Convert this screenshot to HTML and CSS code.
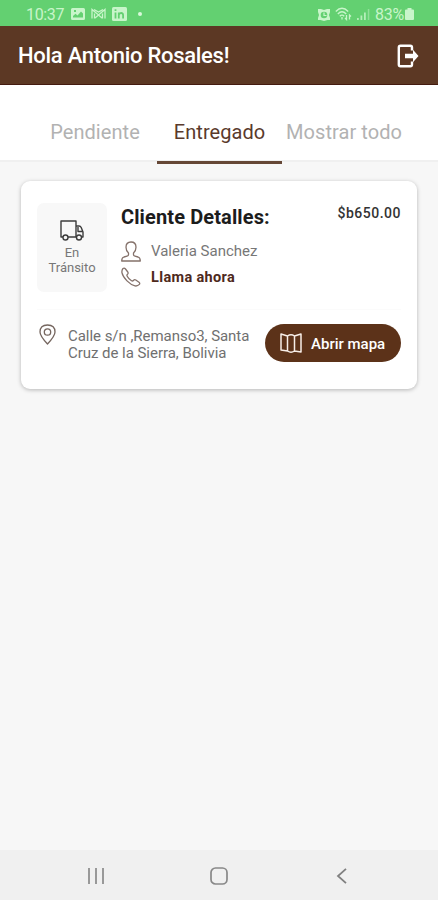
FILE: index.html
```html
<!DOCTYPE html>
<html lang="es">
<head>
<meta charset="utf-8">
<title>Entregas</title>
<link rel="stylesheet" href="styles.css">
</head>
<body>
<div class="status">
  <div class="status-left">
    <span class="clock">10:37</span>
    <svg width="14" height="12" viewBox="0 0 14 12"><path fill="currentColor" fill-rule="evenodd" d="M1.500 0h11a1.500 1.500 0 0 1 1.500 1.500v9a1.500 1.500 0 0 1-1.500 1.500h-11a1.500 1.500 0 0 1-1.500-1.500v-9a1.500 1.500 0 0 1 1.500-1.500zM2 9.500h10v-4l-2-2-3.500 4-2-1.800-2.500 2.300zM3 2v2h2v-2z"/></svg>
    <svg width="15" height="12" viewBox="0 0 15 12" fill="none" stroke="currentColor" stroke-width="1.300"><path d="M1 10.500v-9l6.500 5.500 6.500-5.500v9M3 1.500l4.500 2.500 4.500-2.500M3.500 10.500v-5M11.500 10.500v-5M4 10l3.500-3 3.500 3"/></svg>
    <svg width="15" height="14" viewBox="0 0 15 14"><rect width="15" height="14" rx="1.500" fill="currentColor"/><path stroke="#63d071" stroke-width="1.800" fill="none" d="M3.500 5.500v6M3.500 2.300v1.700M6.800 11.500v-6M6.800 8q.5-2 2.300-2t2 2v3.500"/></svg>
    <i class="dot"></i>
  </div>
  <div class="status-right">
    <svg width="12" height="13" viewBox="0 0 12 13"><path fill="currentColor" d="M0 1h3l3 1 3-1h3v3l-1 3 1 3v2h-2.500l-3.500 1-3.500-1h-2.500v-2l1-3-1-3z"/><circle cx="6" cy="7" r="3.300" fill="#63d071"/><path d="M6 4.500v3h2.500" fill="none" stroke="currentColor" stroke-width="1.200"/></svg>
    <svg width="17" height="14" viewBox="0 0 17 14" fill="none" stroke="currentColor" stroke-width="1.300"><path d="M.8 4.500q6.200-6.500 12.400 0M2.800 7q4.200-4.500 8.400 0M4.800 9.300q2.200-2.400 4.400 0M7 10v2.500M11.500 8v4.500l-1.500-1.500M14.500 12.500v-4.500l1.500 1.500"/></svg>
    <svg width="13" height="12" viewBox="0 0 13 12" fill="currentColor"><path opacity=".8" d="M0 10h1.800v2h-1.800zM3.500 7.500h1.800v4.500h-1.800zM7 4.500h1.800v7.500h-1.800z"/><path opacity=".45" d="M10.800 1h1.500v11h-1.500z"/></svg>
    <span class="battery-text">83%</span>
    <svg class="battery" width="9" height="12" viewBox="0 0 9 12"><path fill="currentColor" d="M2.500 0h4v1.500h1.500q1 0 1 1v8.500q0 1-1 1h-7q-1 0-1-1v-8.500q0-1 1-1h1.500z"/></svg>
  </div>
</div>
<header class="header">
  <h1>Hola Antonio Rosales!</h1>
  <svg width="22" height="24" viewBox="0 0 22 24"><path d="M15 6.500v-3q0-1.700-1.700-1.700h-9.800q-1.700 0-1.700 1.700v17q0 1.700 1.700 1.700h9.800q1.700 0 1.700-1.700v-3" fill="none" stroke="#fff" stroke-width="2.400"/><path fill="#fff" d="M8 9.800h8v-4l5.500 6.200-5.500 6.200v-4h-8z"/></svg>
</header>
<nav class="tabs">
  <div class="tab"><span>Pendiente</span></div>
  <div class="tab active"><span>Entregado</span></div>
  <div class="tab"><span>Mostrar todo</span></div>
</nav>
<main>
  <section class="card">
    <div class="summary">
      <div class="state">
        <svg width="24" height="21" viewBox="0 0 24 21" fill="none" stroke="#3c3c3c" stroke-width="1.400" stroke-linejoin="round"><path d="M3 17h-2v-16h15v16h-8M16 6h3q1.500 0 2.200 1.500l1.800 4.500v5h-1.500M18 7v4.500h5M16 17h1"/><circle cx="5.500" cy="17.500" r="2.500"/><circle cx="19" cy="17.500" r="2.500"/></svg>
        <span>En<br>Tránsito</span>
      </div>
      <div class="details">
        <div class="title-row"><h2>Cliente Detalles:</h2><span class="price">$b650.00</span></div>
        <div class="line"><svg width="20" height="21" viewBox="0 0 20 21" fill="none" stroke="#84716a" stroke-width="1.300" stroke-linejoin="round"><path d="M7.500 12q-2.500-2.200-2.500-5.800 0-5.200 5-5.200t5 5.200q0 3.600-2.500 5.800v1.800q0 1 1.500 1.400l3 .8q2.300.7 2.300 4h-18.600q0-3.300 2.300-4l3-.8q1.500-.4 1.500-1.400z"/></svg><span>Valeria Sanchez</span></div>
        <div class="line"><svg width="20" height="20" viewBox="0 0 20 20" fill="none" stroke="#84716a" stroke-width="1.300" stroke-linejoin="round"><path d="M2 1.500q1.300-1 2.500.5l2.300 3q.8 1.200-.3 2.200-1 .8-.3 2 1.500 2.800 4.300 4.500 1.200.7 2-.3 1-1.200 2.300-.4l3.200 2.200q1.300 1 .3 2.200-1.800 2-4.300 1.500-3.800-.8-8-5-4.200-4.300-5-8-.5-2.500 1-4.400z"/></svg><span class="call">Llama ahora</span></div>
      </div>
    </div>
    <div class="location">
      <svg width="17" height="21" viewBox="0 0 17 21" fill="none" stroke="#75665f" stroke-width="1.300" stroke-linejoin="round"><path d="M8.500 20q-7.500-8-7.500-12 0-7 7.500-7t7.500 7q0 4-7.500 12z"/><circle cx="8.500" cy="8" r="3.200"/></svg>
      <p class="address"><span>Calle s/n ,Remanso3, Santa</span><br><span>Cruz de la Sierra, Bolivia</span></p>
      <button class="map" type="button"><svg width="22" height="21" viewBox="0 0 22 21" fill="none" stroke="#f7eee8" stroke-width="1.500" stroke-linejoin="round"><path d="M1 1l6.500 2q3.500-2.500 7 0l6.500-2v18l-6.500-1q-3.500 2.500-7 0l-6.500-1zM7.500 3v15M14.500 3v15"/></svg><span>Abrir mapa</span></button>
    </div>
  </section>
</main>
<footer class="nav">
  <svg width="18" height="16" viewBox="0 0 18 16" stroke="#909090" stroke-width="1.800"><path d="M2 0v16M9 0v16M16 0v16"/></svg>
  <svg width="18" height="18" viewBox="0 0 18 18"><rect x="1" y="1" width="16" height="16" rx="4.500" fill="none" stroke="#888" stroke-width="1.700"/></svg>
  <svg width="18" height="16" viewBox="0 0 18 16" fill="none" stroke="#808080" stroke-width="1.800"><path d="M13 .8l-8 7.200 8 7.200"/></svg>
</footer>
</body>
</html>
```
FILE: styles.css
```css
* { box-sizing: border-box; }
body { margin: 0; height: 900px; display: flex; flex-direction: column; background: #f7f7f7; font-family: Roboto, "Liberation Sans", sans-serif; overflow: hidden; }
svg { display: block; flex: none; }
h1, h2, p { margin: 0; }
span { white-space: nowrap; }
.status { height: 26px; flex: none; display: flex; justify-content: space-between; padding: 2px 24px 0 26px; background: #63d071; color: #c8f5ca; }
.status-left, .status-right { display: flex; align-items: center; }
.status-left { gap: 6px; }
.clock { font-size: 16px; letter-spacing: -.35px; width: 39px; }
.dot { width: 4px; height: 4px; border-radius: 50%; background: #d9f8da; margin-left: 5px; }
.status-right { gap: 5px; }
.battery-text { font-size: 16px; letter-spacing: -.2px; }
.battery { margin-left: -4px; }
.header { height: 59px; flex: none; display: flex; align-items: center; justify-content: space-between; padding: 1px 19px 0 18px; background: #5c3824; border-bottom: 1px solid #441b10; color: #fff; }
.header h1 { font-size: 22px; font-weight: 500; line-height: 28px; letter-spacing: -.28px; padding-top: 1px; }
.tabs { height: 79px; flex: none; display: grid; grid-template-columns: repeat(3, 124.500px); justify-content: center; padding-left: 1px; background: linear-gradient(#fff 75px, #f0f0f0 75px, #f0f0f0 77px, #f7f7f7 77px); }
.tab { display: flex; justify-content: center; padding-top: 34px; line-height: 26px; font-size: 20px; letter-spacing: .06px; color: #b2b2b2; border-bottom: 3px solid transparent; }
.active { color: #5a3a2c; border-color: #654736; }
main { flex: 1; padding: 17px 21px; }
.card { height: 208px; padding: 22px 16px 0; background: #fff; border-radius: 9px; box-shadow: 0 1px 4px #0004; }
.summary { height: 106px; display: flex; gap: 14px; }
.state { width: 70px; height: 89px; padding-top: 17px; border-radius: 7px; background: #f8f8f8; display: flex; flex-direction: column; align-items: center; text-align: center; font-size: 13px; line-height: 15px; color: #777; }
.state span { margin-top: 4px; }
.details { flex: 1; }
.title-row { display: flex; justify-content: space-between; height: 35px; }
h2 { font-size: 20px; line-height: 28px; font-weight: 700; letter-spacing: .12px; color: #1c1c1c; }
.price { font-size: 14px; line-height: 21px; font-weight: 500; letter-spacing: .5px; color: #333; }
.line { display: flex; align-items: center; height: 26px; gap: 10px; color: #777; font-size: 15px; }
.call { color: #4e291c; font-weight: 700; font-size: 14.500px; letter-spacing: .35px; }
.location { display: flex; border-top: 1px solid #fbfbfb; padding-top: 14px; }
.location > svg { margin-left: 2px; }
.address { width: 197px; padding-left: 12px; padding-top: 4px; font-size: 15px; line-height: 17px; letter-spacing: -.04px; color: #707070; }
.map { width: 136px; height: 38px; border: 0; border-radius: 19px; display: flex; align-items: center; padding: 1px 15px 0; gap: 9px; flex: none; margin-left: 12px; background: #5c3219; color: #fff; font: 500 15px Roboto, sans-serif; }
.nav { height: 50px; flex: none; display: flex; justify-content: space-between; align-items: center; padding: 2px 87px 0; background: #f0f0f0; }
```
